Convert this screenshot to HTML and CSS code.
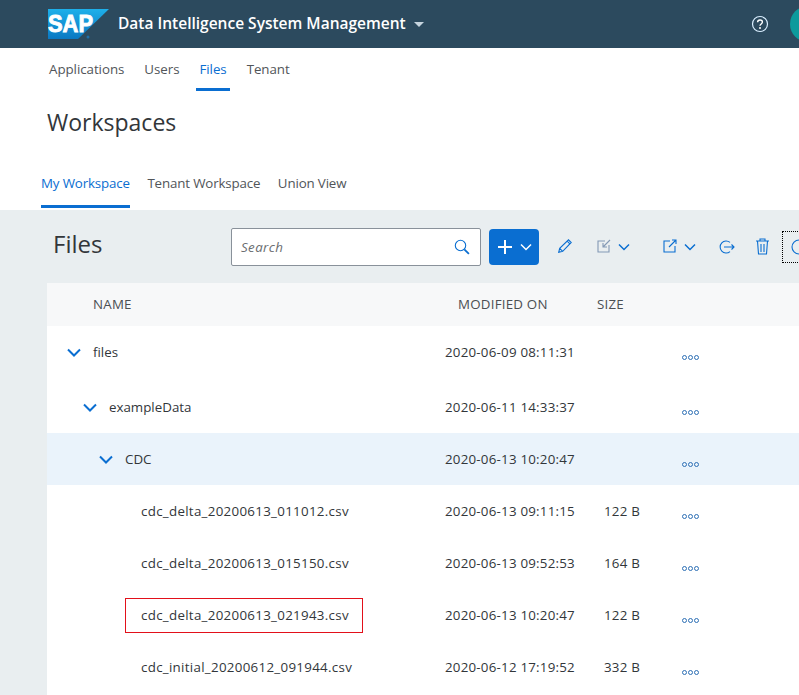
FILE: index.html

```html
<!DOCTYPE html>
<html lang="en">
<head>
    <meta charset="UTF-8">
    <meta name="viewport" content="width=device-width, initial-scale=1.0">
    <title>Data Intelligence System Management</title>
    <link rel="stylesheet" href="styles.css">
</head>
<body>

    <!-- Shell bar -->
    <header class="shell">
        <svg class="logo" width="62" height="31" viewBox="0 0 62 31">
            <defs>
                <linearGradient id="sapBlue" x1="0" y1="0" x2="0" y2="1">
                    <stop offset="0" stop-color="#1eb0ea"/>
                    <stop offset="1" stop-color="#0a78c2"/>
                </linearGradient>
            </defs>
            <polygon points="0,0 61,0 30,30 0,30" fill="url(#sapBlue)"/>
            <text x="0" y="23" class="logo-text" textLength="45" lengthAdjust="spacingAndGlyphs">SAP</text>
            <circle cx="40" cy="28" r="1.500" fill="#1d6ea8"/>
        </svg>
        <span class="shell-title">Data Intelligence System Management</span>
        <span class="shell-caret"></span>
        <svg class="help" width="18" height="18" viewBox="0 0 18 18">
            <circle cx="9" cy="9" r="7.500" fill="none" stroke="#d9eeff" stroke-width="1.200"/>
            <path d="M6.600 7.200C6.600 5.800 7.700 5 9 5s2.400.8 2.400 2.100c0 1.900-2.400 1.900-2.400 3.700" fill="none" stroke="#fff" stroke-width="1.400"/>
            <circle cx="9" cy="13" r="1" fill="#fff"/>
        </svg>
        <span class="avatar"></span>
    </header>

    <nav class="nav">
        <a class="nav-item">Applications</a>
        <a class="nav-item">Users</a>
        <a class="nav-item active">Files</a>
        <a class="nav-item">Tenant</a>
    </nav>

    <h1 class="page-title">Workspaces</h1>

    <nav class="tabs">
        <a class="tab active">My Workspace</a>
        <a class="tab">Tenant Workspace</a>
        <a class="tab">Union View</a>
    </nav>

    <main class="panel">
        <div class="toolbar">
            <h2 class="files-title">Files</h2>
            <div class="search">
                <span class="search-text">Search</span>
                <svg width="16" height="16" viewBox="0 0 16 16" class="icon">
                    <circle cx="6.500" cy="6.500" r="5.200"/>
                    <path d="M10.300 10.300l4.600 4.600" stroke-width="1.800"/>
                </svg>
            </div>
            <button class="add-btn">
                <svg width="16" height="16" viewBox="0 0 16 16"><path d="M8 1v14M1 8h14" stroke="#fff" stroke-width="2" fill="none"/></svg>
                <svg width="12" height="8" viewBox="0 0 12 8"><path d="M1 1.500l5 5 5-5" stroke="#fff" stroke-width="1.500" fill="none"/></svg>
            </button>
            <svg class="icon tool-edit" width="14" height="14" viewBox="0 0 14 14">
                <path d="M.7 13.300l1-4L10.500.8l2.700 2.700-8.500 8.800zM1.700 9.300l3 3M9.200 2.100l2.700 2.700"/>
            </svg>
            <svg class="icon tool-import" width="14" height="14" viewBox="0 0 14 14">
                <path d="M8 2H1v11h11V6" stroke="#8399b5"/>
                <path d="M13 1L6 8M6 4v4h4" stroke="#8399b5"/>
            </svg>
            <svg class="icon tool-chev" width="12" height="8" viewBox="0 0 12 8"><path d="M1 1.500l5 5 5-5" stroke-width="1.500"/></svg>
            <svg class="icon tool-export" width="14" height="14" viewBox="0 0 14 14">
                <path d="M7 2H1v11h11V7"/>
                <path d="M6 8l7-7M9 1h4v4"/>
            </svg>
            <svg class="icon tool-chev" width="12" height="8" viewBox="0 0 12 8"><path d="M1 1.500l5 5 5-5" stroke-width="1.500"/></svg>
            <svg class="icon tool-share" width="17" height="14" viewBox="0 0 17 14">
                <path d="M12 2.400A6 6 0 1 0 12 11.600"/>
                <path d="M6 7h10M13.500 4.500L16 7l-2.500 2.500"/>
            </svg>
            <svg class="icon tool-trash" width="15" height="17" viewBox="0 0 15 17">
                <path d="M1 3h13M5 3V1h5v2M2.500 3l1 13h8l1-13M6 6v8M9 6v8"/>
            </svg>
            <span class="tool-focus">
                <svg class="icon" width="16" height="16" viewBox="0 0 16 16"><circle cx="8" cy="8" r="7"/></svg>
            </span>
        </div>

        <section class="table">
            <div class="row head">
                <span class="head-name">NAME</span>
                <span class="head-date">MODIFIED ON</span>
                <span class="head-size">SIZE</span>
            </div>

            <div class="row first">
                <span class="name lvl0"><svg class="chev" width="14" height="9" viewBox="0 0 14 9"><path d="M1 1.500l6 6 6-6"/></svg>files</span>
                <span>2020-06-09 08:11:31</span>
                <span></span>
                <span class="dots"><i></i><i></i><i></i></span>
            </div>
            <div class="row">
                <span class="name lvl1"><svg class="chev" width="14" height="9" viewBox="0 0 14 9"><path d="M1 1.500l6 6 6-6"/></svg>exampleData</span>
                <span>2020-06-11 14:33:37</span>
                <span></span>
                <span class="dots"><i></i><i></i><i></i></span>
            </div>
            <div class="row selected">
                <span class="name lvl2"><svg class="chev" width="14" height="9" viewBox="0 0 14 9"><path d="M1 1.500l6 6 6-6"/></svg>CDC</span>
                <span>2020-06-13 10:20:47</span>
                <span></span>
                <span class="dots"><i></i><i></i><i></i></span>
            </div>
            <div class="row">
                <span class="name lvl3">cdc_delta_20200613_011012.csv</span>
                <span>2020-06-13 09:11:15</span>
                <span>122 B</span>
                <span class="dots"><i></i><i></i><i></i></span>
            </div>
            <div class="row">
                <span class="name lvl3">cdc_delta_20200613_015150.csv</span>
                <span>2020-06-13 09:52:53</span>
                <span>164 B</span>
                <span class="dots"><i></i><i></i><i></i></span>
            </div>
            <div class="row">
                <span class="name lvl3"><span class="marked">cdc_delta_20200613_021943.csv</span></span>
                <span>2020-06-13 10:20:47</span>
                <span>122 B</span>
                <span class="dots"><i></i><i></i><i></i></span>
            </div>
            <div class="row">
                <span class="name lvl3">cdc_initial_20200612_091944.csv</span>
                <span>2020-06-12 17:19:52</span>
                <span>332 B</span>
                <span class="dots"><i></i><i></i><i></i></span>
            </div>
        </section>
    </main>

</body>
</html>
```

FILE: styles.css

```css
html, body {
    margin: 0;
    height: 695px;
    overflow: hidden;
}

body {
    font-family: 'Open Sans', sans-serif;
    font-size: 13.33px;
    color: #32363a;
    background-color: #fff;
}

/* Shell bar */
.shell {
    display: flex;
    align-items: center;
    height: 48px;
    padding-left: 48px;
    background-color: #2c4a5e;
}

.logo {
    flex: none;
}

.logo-text {
    font-family: 'Liberation Sans', sans-serif;
    font-weight: bold;
    font-size: 24px;
    fill: #fff;
    stroke: #fff;
    stroke-width: 0.9;
}

.shell-title {
    margin-left: 8px;
    margin-bottom: 2px;
    font-size: 15.5px;
    font-weight: 600;
    color: #fff;
    white-space: nowrap;
}

.shell-caret {
    margin-left: 8px;
    margin-top: 1px;
    border-left: 5px solid transparent;
    border-right: 5px solid transparent;
    border-top: 5px solid #c6d4de;
}

.help {
    margin-left: auto;
    flex: none;
}

.avatar {
    flex: none;
    width: 36px;
    height: 36px;
    margin-left: 21px;
    margin-right: -27px;
    border-radius: 50%;
    background-color: #0d9a9c;
}

/* Top navigation */
.nav {
    display: flex;
    height: 43px;
    padding-left: 49px;
    gap: 20px;
    letter-spacing: -0.05px;
}

.nav-item {
    display: block;
    height: 43px;
    line-height: 43px;
    color: #515559;
    box-sizing: border-box;
}

.nav-item.active {
    color: #0a6ed1;
    padding: 0 3px;
    margin: 0 -3px;
    border-bottom: 3px solid #0a6ed1;
}

.page-title {
    margin: 0;
    padding-left: 47px;
    height: 75px;
    padding-top: 15px;
    box-sizing: border-box;
    font-size: 23px;
    line-height: 32px;
    font-weight: 400;
    color: #32363a;
}

/* Workspace tabs */
.tabs {
    display: flex;
    gap: 17.5px;
    height: 44px;
    padding-left: 41px;
    letter-spacing: -0.15px;
}

.tab {
    display: block;
    height: 42px;
    line-height: 34px;
    box-sizing: border-box;
    color: #515559;
}

.tab.active {
    color: #0a6ed1;
    border-bottom: 3px solid #0a6ed1;
}

/* Grey content area */
.panel {
    height: 485px;
    padding-left: 47px;
    background-color: #e9eef0;
}

.toolbar {
    display: flex;
    align-items: center;
    height: 73px;
    white-space: nowrap;
}

.files-title {
    width: 178px;
    margin: 0 0 6px 6px;
    font-size: 24px;
    font-weight: 400;
    color: #32363a;
    flex: none;
}

.search {
    display: flex;
    align-items: center;
    justify-content: space-between;
    flex: none;
    width: 250px;
    height: 38px;
    padding: 0 10px 0 9px;
    box-sizing: border-box;
    background-color: #fff;
    border: 1px solid #89919a;
    border-radius: 2px;
}

.search-text {
    font-style: italic;
    letter-spacing: 0.4px;
    color: #6a6d70;
}

.icon {
    flex: none;
    fill: none;
    stroke: #0a6ed1;
    stroke-width: 1.1;
}

.add-btn {
    display: flex;
    align-items: center;
    justify-content: center;
    gap: 7px;
    flex: none;
    width: 50px;
    height: 36px;
    margin-left: 8px;
    padding: 0;
    border: 0;
    border-radius: 4px;
    background-color: #0a6ed1;
}

.tool-edit { margin-left: 19px; margin-bottom: 2px; }
.tool-import { margin-left: 25px; margin-bottom: 2px; }
.tool-export { margin-left: 33px; margin-bottom: 1px; }
.tool-share { margin-left: 22px; }
.tool-trash { margin-left: 20px; margin-bottom: 1px; }
.tool-chev { margin-left: 7px; }

.tool-focus {
    display: flex;
    align-items: center;
    flex: none;
    width: 40px;
    height: 32px;
    margin-left: 12px;
    padding-left: 8px;
    box-sizing: border-box;
    border: 1px dotted #000;
}

/* File table */
.table {
    min-height: 420px;
    background-color: #fff;
}

.row {
    display: grid;
    grid-template-columns: 398px 159px 77px 1fr;
    align-items: center;
    height: 52px;
    white-space: nowrap;
    letter-spacing: 0.22px;
}

.row.head {
    display: flex;
    height: 43px;
    padding-bottom: 2px;
    box-sizing: border-box;
    background-color: #f7f8f9;
    color: #4b4f53;
}

.head-name { margin-left: 46px; width: 365px; }
.head-date { width: 139px; }

.row.first {
    height: 55px;
    padding-bottom: 3px;
    box-sizing: border-box;
}

.row.selected {
    background-color: #eaf3fb;
}

.name {
    display: flex;
    align-items: center;
}

.chev {
    flex: none;
    margin-right: 12px;
    fill: none;
    stroke: #0a6ed1;
    stroke-width: 2;
}

.lvl0, .lvl1, .lvl2 { letter-spacing: 0; }
.lvl0 { padding-left: 20px; }
.lvl1 { padding-left: 36px; }
.lvl2 { padding-left: 52px; }
.lvl3 { padding-left: 94px; letter-spacing: 0.3px; }

.marked {
    display: flex;
    align-items: center;
    width: 238px;
    height: 35px;
    margin-left: -16px;
    padding-left: 15px;
    box-sizing: border-box;
    border: 1px solid #e2101a;
}

.dots {
    display: flex;
    gap: 1px;
    padding-top: 10px;
    padding-left: 1px;
}

.dots i {
    width: 3px;
    height: 3px;
    border: 1px solid #2d6fb5;
    border-radius: 50%;
}
```
